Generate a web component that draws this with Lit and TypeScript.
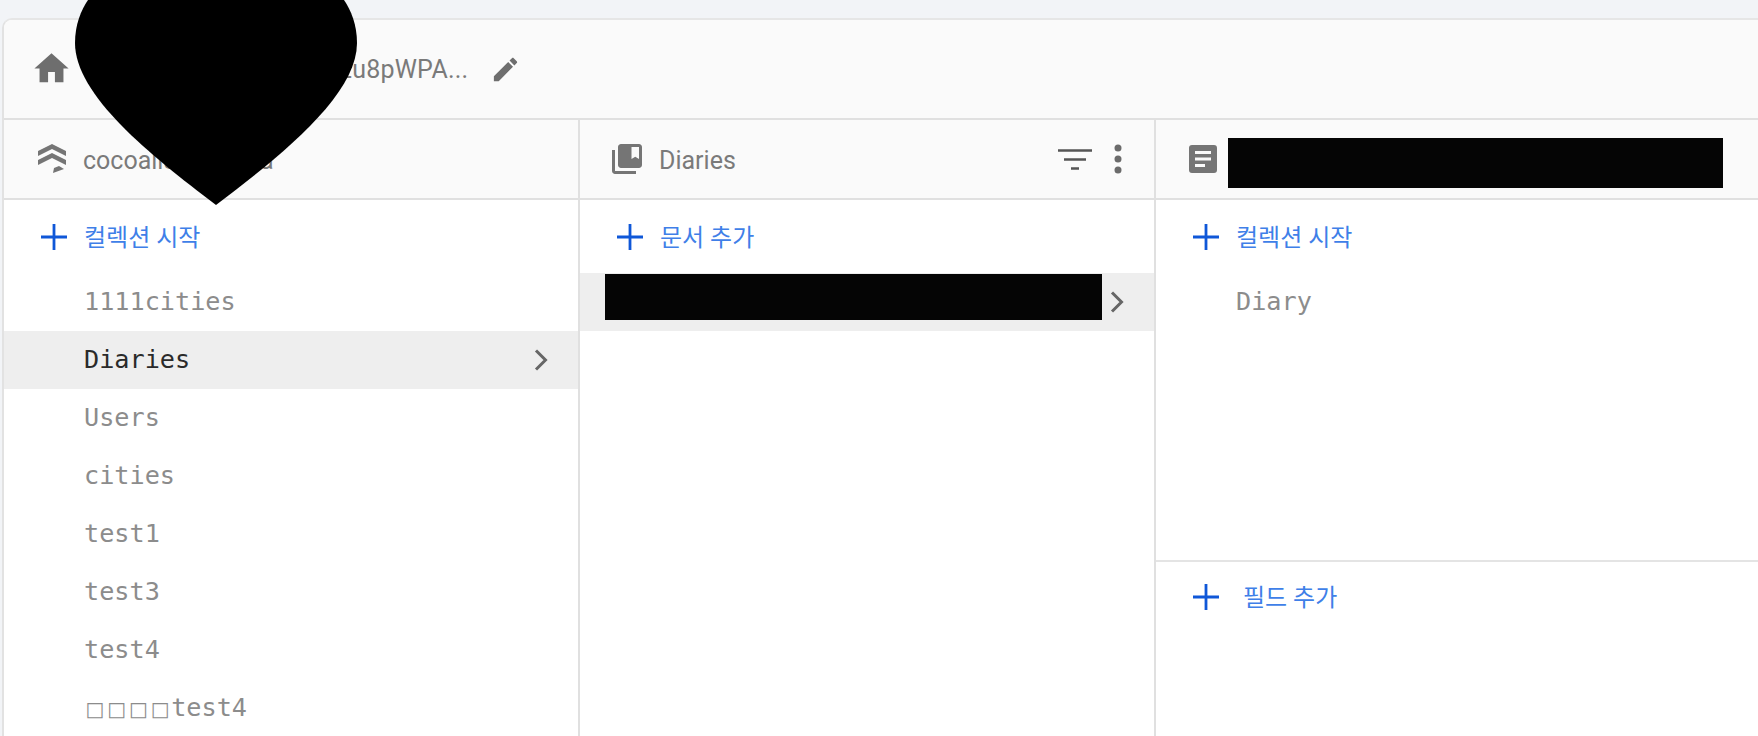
import { LitElement, css, html, svg } from 'lit';
import { customElement } from 'lit/decorators.js';

const collections = ['1111cities', 'Diaries', 'Users', 'cities', 'test1', 'test3', 'test4'];

const plus = html`<svg class="plus" viewBox="0 0 26 26"><path d="M0 13h26M13 0v26" /></svg>`;
const chevron = html`<svg class="chevron" viewBox="0 0 14 22"><path d="M2 1.5 11.5 11 2 20.5" /></svg>`;

@customElement('app-root')
export class AppRoot extends LitElement {
	static override styles = css`
    :host {
      display: block;
      position: relative;
      height: 736px;
      overflow: hidden;
      box-sizing: border-box;
      padding: 18px 0 0 2px;
      background: #f2f4f7;
      font-family: Roboto, 'Noto Sans CJK KR', sans-serif;
      color: #7a7a7a;
    }

    .card {
      height: 718px;
      box-sizing: border-box;
      display: flex;
      flex-direction: column;
      background: #fff;
      border-top: 2px solid #e6e6e6;
      border-left: 2px solid #e2e2e2;
      border-top-left-radius: 10px;
      overflow: hidden;
    }

    .crumbs {
      flex: none;
      height: 100px;
      box-sizing: border-box;
      display: flex;
      align-items: center;
      background: #fafafa;
      border-bottom: 2px solid #e0e0e0;
      padding-left: 27px;
      font-size: 25px;
      letter-spacing: 0.2px;
    }

    .home {
      width: 41px;
      height: 41px;
      fill: #6e6e6e;
      margin-top: -2px;
    }

    .path {
      margin-left: 266px;
      width: 130px;
      white-space: nowrap;
    }

    .edit {
      width: 31px;
      height: 31px;
      fill: #6e6e6e;
      margin-left: 22px;
    }

    .columns {
      flex: 1;
      display: grid;
      grid-template-columns: 576px 576px 1fr;
      min-height: 0;
    }

    .col {
      display: flex;
      flex-direction: column;
      min-width: 0;
      border-right: 2px solid #e0e0e0;
    }

    .col.last {
      border-right: none;
    }

    .head {
      flex: none;
      height: 80px;
      box-sizing: border-box;
      display: flex;
      align-items: center;
      gap: 14px;
      padding-left: 29px;
      background: #fafafa;
      border-bottom: 2px solid #e0e0e0;
      font-size: 25px;
    }

    .head > span {
      margin-top: 2px;
    }

    .head-icon {
      flex: none;
      width: 36px;
      height: 36px;
      fill: #757575;
    }

    .tools {
      margin-left: auto;
      display: flex;
      align-items: center;
      gap: 22px;
      padding-right: 32px;
    }

    .filter {
      width: 34px;
      height: 21px;
      stroke: #555;
      stroke-width: 2.7;
    }

    .more {
      width: 8px;
      height: 30px;
      fill: #6b6b6b;
    }

    .add {
      flex: none;
      height: 73px;
      display: flex;
      align-items: center;
      gap: 17px;
      padding-left: 37px;
      font-size: 24px;
      color: #3f7fe8;
    }

    .add span {
      margin-top: -3px;
    }

    .add.field {
      height: 70px;
      gap: 24px;
    }

    .plus {
      flex: none;
      width: 26px;
      height: 26px;
      fill: none;
      stroke: #0f57d8;
      stroke-width: 2.8;
    }

    .rows {
      flex: 1;
      min-height: 0;
    }

    .row {
      height: 58px;
      box-sizing: border-box;
      display: flex;
      align-items: center;
      justify-content: space-between;
      padding: 0 30px 2px 80px;
      font-family: 'DejaVu Sans Mono', 'Noto Sans CJK KR', monospace;
      font-size: 25.2px;
      color: #8c8c8c;
    }

    .row.on {
      background: #eeeeee;
      color: #2a2a2a;
    }

    .tofu {
      display: inline-block;
      width: 21.8px;
      font-size: 20px;
      text-align: center;
      font-family: 'DejaVu Sans', sans-serif;
    }

    .chevron {
      width: 14px;
      height: 22px;
      margin-top: 2px;
      fill: none;
      stroke: #666;
      stroke-width: 3;
    }

    .fields {
      flex: none;
      height: 177px;
      box-sizing: border-box;
      border-top: 2px solid #e4e4e4;
    }

    .mask {
      position: absolute;
      background: #050505;
    }

    .mask.doc {
      left: 605px;
      top: 274px;
      width: 497px;
      height: 46px;
    }

    .mask.title {
      left: 1228px;
      top: 138px;
      width: 495px;
      height: 50px;
    }

    .heart {
      position: absolute;
      left: 75px;
      top: 0;
      width: 282px;
      height: 206px;
      fill: #000;
    }
  `;

	private renderStackIcon() {
		return html`<svg class="head-icon" viewBox="0 0 36 36">
      ${svg`<path d="M19 3 33 10v5L19 8 5 15v-5z" />
        <path d="M19 12 33 19v5L19 17 5 24v-5z" />
        <path d="M20 32l1-5 5-2 5 3z" />`}
    </svg>`;
	}

	protected override render() {
		return html`
      <div class="card">
        <div class="crumbs">
          <svg class="home" viewBox="0 0 24 24"><path d="M10 20v-6h4v6h5v-8h3L12 3 2 12h3v8z" /></svg>
          <span class="path">2u8pWPA...</span>
          <svg class="edit" viewBox="0 0 24 24">
            <path d="M3 17.250V21h3.750L17.810 9.940l-3.750-3.750L3 17.250zM20.710 7.040c.39-.39.39-1.020 0-1.410l-2.340-2.340c-.39-.39-1.020-.39-1.410 0l-1.830 1.830 3.750 3.750 1.830-1.830z" />
          </svg>
        </div>
        <div class="columns">
          <section class="col">
            <div class="head">${this.renderStackIcon()}<span>cocoalist-1c2e4a</span></div>
            <div class="add">${plus}<span>컬렉션 시작</span></div>
            <div class="rows">
              ${collections.map(
			(name) => html`<div class="row ${name === 'Diaries' ? 'on' : ''}">
                  <span>${name}</span>${name === 'Diaries' ? chevron : null}
                </div>`,
		)}
              <div class="row">
                <span><span class="tofu">□</span><span class="tofu">□</span><span class="tofu">□</span><span class="tofu">□</span>test4</span>
              </div>
            </div>
          </section>
          <section class="col">
            <div class="head">
              <svg class="head-icon" viewBox="0 0 24 24">
                <path d="M4 6H2v14c0 1.100.9 2 2 2h14v-2H4V6zm16-4H8c-1.100 0-2 .9-2 2v12c0 1.100.9 2 2 2h12c1.100 0 2-.9 2-2V4c0-1.100-.9-2-2-2zm0 10l-2.500-1.500L15 12V4h5v8z" />
              </svg>
              <span>Diaries</span>
              <div class="tools">
                <svg class="filter" viewBox="0 0 34 21"><path d="M0 1.500h34M6 10.500h22M13 19.500h8" /></svg>
                <svg class="more" viewBox="0 0 8 30">
                  <circle cx="4" cy="4" r="3.500" /><circle cx="4" cy="15" r="3.500" /><circle cx="4" cy="26" r="3.500" />
                </svg>
              </div>
            </div>
            <div class="add">${plus}<span>문서 추가</span></div>
            <div class="rows">
              <div class="row on" style="justify-content: flex-end">${chevron}</div>
            </div>
          </section>
          <section class="col last">
            <div class="head">
              <svg class="head-icon" viewBox="0 0 36 36">
                <path
                  fill-rule="evenodd"
                  d="M7 4h22a3 3 0 0 1 3 3v22a3 3 0 0 1-3 3H7a3 3 0 0 1-3-3V7a3 3 0 0 1 3-3zm3 6v3h16v-3zm0 6.500v3h16v-3zm0 6.500v3h10v-3z"
                />
              </svg>
            </div>
            <div class="add">${plus}<span>컬렉션 시작</span></div>
            <div class="rows"><div class="row">Diary</div></div>
            <div class="fields">
              <div class="add field">${plus}<span>필드 추가</span></div>
            </div>
          </section>
        </div>
      </div>
      <div class="mask doc"></div>
      <div class="mask title"></div>
      <svg class="heart" viewBox="0 0 282 206">
        <path d="M141 205C75 155 0 95 0 43C0 25 6 10 13 0H269C276 10 282 25 282 43C282 95 207 155 141 205Z" />
      </svg>
    `;
	}
}
